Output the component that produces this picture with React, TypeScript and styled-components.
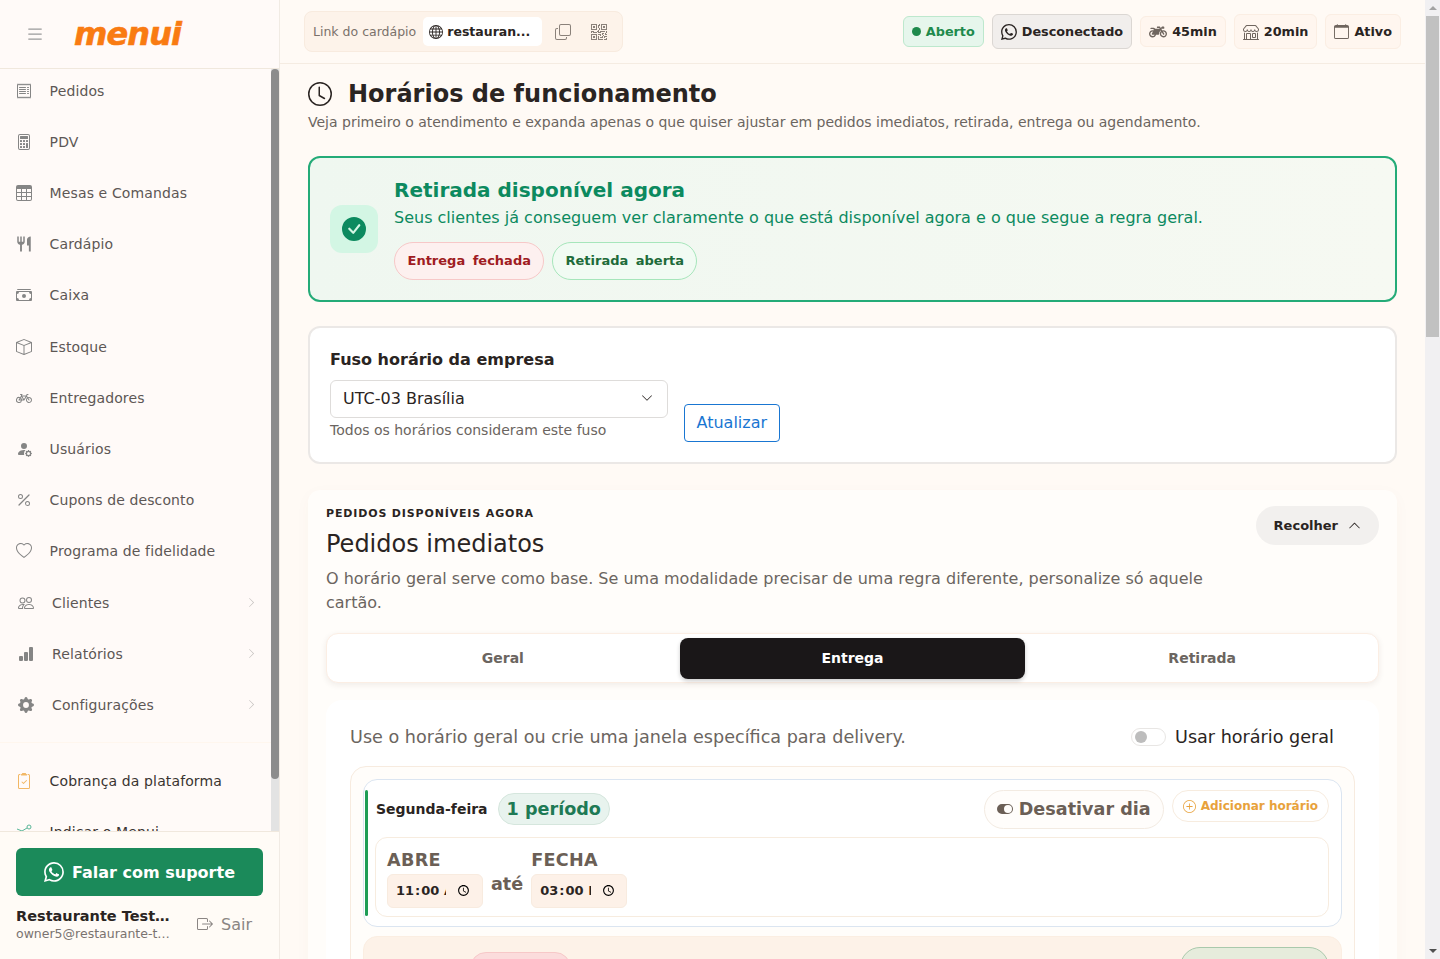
import styled, { createGlobalStyle } from 'styled-components';
import {
  BsBarChartFill,
  BsBicycle,
  BsBox,
  BsBoxArrowRight,
  BsCalculator,
  BsCalendar,
  BsCashStack,
  BsCheckCircleFill,
  BsChevronDown,
  BsChevronRight,
  BsChevronUp,
  BsClipboard2Check,
  BsClock,
  BsCopy,
  BsGearFill,
  BsGlobe,
  BsHeart,
  BsList,
  BsPeople,
  BsPercent,
  BsPersonFillGear,
  BsPlusCircle,
  BsQrCode,
  BsReceipt,
  BsShop,
  BsTable,
  BsToggleOff,
  BsToggleOn,
  BsWhatsapp,
} from 'react-icons/bs';
import { FaMotorcycle } from 'react-icons/fa';
import { MdRestaurant } from 'react-icons/md';

const GlobalStyle = createGlobalStyle`
  html, body {
    margin: 0;
    height: 100%;
    overflow: hidden;
  }
  body {
    font-family: "DejaVu Sans", sans-serif;
    color: #2a2422;
    background: #fffaf5;
  }
  * {
    box-sizing: border-box;
  }
`;

const Layout = styled.div`
  display: flex;
  height: 100vh;
`;

const Sidebar = styled.aside`
  flex: 0 0 280px;
  display: flex;
  flex-direction: column;
  height: 100vh;
  background: #fffaf8;
  border-right: 1px solid #f1ebe4;
`;

const SidebarHead = styled.div`
  flex: 0 0 69px;
  display: flex;
  align-items: center;
  gap: 29px;
  padding-left: 25px;
  border-bottom: 1px solid #f0e8dd;
`;

const MenuButton = styled.span`
  display: flex;
  color: #9a9a9a;
  font-size: 20px;
`;

const Logo = styled.span`
  font-size: 32px;
  line-height: 36px;
  font-weight: 700;
  font-style: italic;
  letter-spacing: -0.9px;
  color: #f97b12;
  -webkit-text-stroke: 0.6px #f97b12;
`;

const NavArea = styled.div`
  flex: 1;
  min-height: 0;
  display: flex;
`;

const NavList = styled.nav`
  flex: 1;
  min-width: 0;
  overflow: hidden;
`;

const NavInner = styled.div`
  margin-top: -3.9px;
`;

const NavTrack = styled.div`
  flex: 0 0 8px;
  background: #e3e3e3;
`;

const NavThumb = styled.div`
  height: 710px;
  border-radius: 4px;
  background: #8c8c8c;
`;

const NavItem = styled.div<{ $nested?: boolean; $strong?: boolean }>`
  display: flex;
  align-items: center;
  height: 51.2px;
  padding-left: ${(p) => (p.$nested ? '18.4px' : '16px')};
  padding-right: 14px;
  font-size: 14px;
  letter-spacing: 0.12px;
  white-space: nowrap;
  color: ${(p) => (p.$strong ? '#3a3431' : '#5d5755')};
`;

const NavIcon = styled.span<{ $color?: string }>`
  flex: 0 0 33.6px;
  display: flex;
  font-size: 16px;
  color: ${(p) => p.$color ?? '#858585'};
`;

const ForkIcon = styled(MdRestaurant)`
  flex-shrink: 0;
  font-size: 18px;
  margin-left: -1px;
`;

const NavArrow = styled.span`
  margin-left: auto;
  display: flex;
  font-size: 11px;
  color: #c2bfbd;
`;

const NavGap = styled.div`
  height: 12px;
  border-bottom: 1px solid #fff6ee;
  margin-bottom: 13px;
`;

const SidebarFooter = styled.div`
  flex: 0 0 128px;
  padding: 16px 16px 0;
  background: #fffbf6;
  border-top: 1px solid #f0e8dd;
`;

const SupportButton = styled.div`
  display: flex;
  align-items: center;
  justify-content: center;
  gap: 8px;
  height: 48px;
  border-radius: 6px;
  background: #1b8a5a;
  color: #fff;
  font-size: 16px;
  font-weight: 700;
  svg {
    font-size: 20px;
  }
`;

const UserRow = styled.div`
  display: flex;
  align-items: center;
  justify-content: space-between;
  margin-top: 11px;
`;

const UserInfo = styled.div`
  width: 156px;
`;

const UserName = styled.div`
  font-size: 14.5px;
  line-height: 18px;
  font-weight: 700;
  color: #2a2422;
  white-space: nowrap;
  overflow: hidden;
  text-overflow: ellipsis;
`;

const UserMail = styled.div`
  font-size: 12.5px;
  line-height: 18px;
  color: #7a7370;
  white-space: nowrap;
  overflow: hidden;
  text-overflow: ellipsis;
`;

const Logout = styled.div`
  display: flex;
  align-items: center;
  gap: 8px;
  margin-top: -2px;
  padding-right: 11px;
  font-size: 16px;
  color: #8a8583;
`;

const Main = styled.main`
  flex: 1;
  min-width: 0;
  height: 100vh;
  display: flex;
  background: #fffaf5;
`;

const MainScroll = styled.div`
  flex: 1;
  min-width: 0;
  overflow: hidden;
`;

const PageTrack = styled.div`
  flex: 0 0 15px;
  display: flex;
  flex-direction: column;
  align-items: center;
  background: #f1f0f2;
`;

const TrackArrow = styled.span<{ $down?: boolean }>`
  flex: 0 0 16px;
  display: flex;
  align-items: center;
  &::before {
    content: '';
    border-left: 4px solid transparent;
    border-right: 4px solid transparent;
    ${(p) => (p.$down ? 'border-top: 4px solid #505050;' : 'border-bottom: 4px solid #a3a3a3;')}
  }
`;

const PageThumb = styled.div`
  width: 13px;
  height: 321px;
  background: #c1c1c1;
`;

const TrackFill = styled.div`
  flex: 1;
`;

const TopBar = styled.header`
  display: flex;
  align-items: center;
  justify-content: space-between;
  height: 64px;
  padding: 0 24px;
  border-bottom: 1px solid #f5ece2;
`;

const LinkBox = styled.div`
  display: flex;
  align-items: center;
  width: 319px;
  height: 41px;
  padding: 0 8px;
  background: #fdf3ea;
  border: 1px solid #f8ebdf;
  border-radius: 8px;
`;

const LinkLabel = styled.span`
  font-size: 12.5px;
  color: #7a716b;
  margin-right: 7px;
  white-space: nowrap;
`;

const LinkChip = styled.span`
  display: flex;
  align-items: center;
  gap: 4px;
  width: 119px;
  height: 29px;
  padding-left: 6px;
  background: #fff;
  border-radius: 5px;
  font-size: 12.5px;
  font-weight: 700;
  color: #2a2422;
  svg {
    font-size: 14px;
  }
`;

const LinkAction = styled.span`
  display: flex;
  margin-left: 13px;
  margin-right: 7px;
  font-size: 16px;
  color: #8a817a;
`;

const StatusRow = styled.div`
  display: flex;
  align-items: center;
  gap: 8px;
`;

const StatusChip = styled.div<{ $tone?: 'open' | 'gray'; $tall?: boolean }>`
  display: flex;
  align-items: center;
  gap: 5px;
  height: ${(p) => (p.$tall ? '35px' : '31px')};
  padding: 0 8px;
  border-radius: 6px;
  font-size: 12.8px;
  font-weight: 700;
  white-space: nowrap;
  border: 1px solid
    ${(p) => (p.$tone === 'open' ? '#bde8cd' : p.$tone === 'gray' ? '#dbd7d3' : '#fbeee3')};
  background: ${(p) => (p.$tone === 'open' ? '#e6f6ec' : p.$tone === 'gray' ? '#f1eeec' : '#fff6ef')};
  color: ${(p) => (p.$tone === 'open' ? '#1e8a4c' : '#2a2422')};
  svg {
    font-size: 16px;
    color: ${(p) => (p.$tone === 'gray' ? '#2a2422' : '#6f655e')};
  }
`;

const BikeIcon = styled(FaMotorcycle)`
  && {
    font-size: 18px;
  }
`;

const CalendarIcon = styled(BsCalendar)`
  && {
    font-size: 15px;
  }
`;

const OpenDot = styled.span`
  width: 9px;
  height: 9px;
  border-radius: 50%;
  background: #1e8a4c;
`;

const Content = styled.div`
  display: flex;
  flex-direction: column;
  padding: 17px 28px 40px;
`;

const TitleRow = styled.div`
  display: flex;
  align-items: center;
  gap: 16px;
  height: 26px;
  svg {
    font-size: 24px;
    color: #2a2422;
  }
`;

const PageTitle = styled.h1`
  margin: 0;
  font-size: 24px;
  line-height: 26px;
  font-weight: 700;
  color: #2a2422;
`;

const PageSub = styled.p`
  margin: 5px 0 24px;
  font-size: 14px;
  line-height: 20px;
  color: #6b6560;
`;

const Hero = styled.section`
  display: flex;
  align-items: center;
  gap: 16px;
  height: 146px;
  padding: 0 20px;
  border: 2px solid #24ab78;
  border-radius: 12px;
  background: linear-gradient(90deg, #eff7f0, #f6f9f2);
`;

const HeroIcon = styled.div`
  display: flex;
  align-items: center;
  justify-content: center;
  width: 48px;
  height: 48px;
  border-radius: 12px;
  background: #d3f6e4;
  color: #0c8a5f;
  font-size: 24px;
`;

const HeroTitle = styled.h2`
  margin: 0;
  font-size: 20px;
  line-height: 24px;
  font-weight: 700;
  color: #0c8a5f;
`;

const HeroText = styled.p`
  margin: 4px 0 12px;
  font-size: 16px;
  line-height: 24px;
  color: #0c8a5f;
`;

const HeroPills = styled.div`
  display: flex;
  gap: 8px;
`;

const HeroPill = styled.span<{ $open?: boolean }>`
  display: flex;
  align-items: center;
  height: 38px;
  padding: ${(p) => (p.$open ? '0 12px 2px' : '0 12.5px 2px')};
  border-radius: 19px;
  font-size: 13px;
  font-weight: 700;
  word-spacing: 3px;
  border: 1px solid ${(p) => (p.$open ? '#a6e6bb' : '#f7c8c8')};
  background: ${(p) => (p.$open ? '#f1fbf3' : '#fdf0ef')};
  color: ${(p) => (p.$open ? '#1e6b3a' : '#9f1c22')};
`;

const ZoneCard = styled.section`
  margin-top: 24px;
  height: 138px;
  padding: 21px 20px 0;
  background: #fff;
  border: 2px solid #ebe8e6;
  border-radius: 12px;
`;

const ZoneTitle = styled.h3`
  margin: 0 0 9px;
  font-size: 16px;
  line-height: 22px;
  font-weight: 700;
  color: #2a2422;
`;

const ZoneRow = styled.div`
  display: flex;
  align-items: flex-end;
  gap: 16px;
`;

const ZoneField = styled.div`
  padding-bottom: 2px;
`;

const ZoneSelect = styled.div`
  display: flex;
  align-items: center;
  justify-content: space-between;
  width: 338px;
  height: 38px;
  padding: 0 14px 2px 12px;
  border: 1px solid #dedcda;
  border-radius: 6px;
  font-size: 16px;
  color: #2a2422;
  svg {
    font-size: 12px;
  }
`;

const ZoneHelp = styled.div`
  margin-top: 2px;
  font-size: 14px;
  line-height: 20px;
  color: #6b6560;
`;

const UpdateButton = styled.button`
  height: 38px;
  padding: 0 11.5px 2px;
  background: #fff;
  border: 1px solid #1976d2;
  border-radius: 4px;
  font: inherit;
  font-size: 16px;
  color: #1976d2;
`;

const Panel = styled.section`
  margin-top: 26px;
  padding: 17px 18px 18px;
  background: #fffdfa;
  border-radius: 12px;
  box-shadow: 0 4px 16px rgba(120, 90, 50, 0.03);
`;

const PanelHead = styled.div`
  display: flex;
  justify-content: space-between;
  align-items: flex-start;
`;

const Eyebrow = styled.div`
  font-size: 11px;
  line-height: 14px;
  font-weight: 700;
  letter-spacing: 0.85px;
  text-transform: uppercase;
  color: #2a2422;
`;

const PanelTitle = styled.h2`
  margin: 7px 0 7px;
  font-size: 24px;
  line-height: 32px;
  font-weight: 400;
  color: #2a2422;
`;

const PanelText = styled.p`
  margin: 0;
  width: 900px;
  font-size: 16px;
  line-height: 24px;
  color: #6b6560;
`;

const CollapseButton = styled.div`
  display: flex;
  align-items: center;
  gap: 10px;
  height: 39px;
  margin-top: -1px;
  padding: 0 18px;
  border-radius: 20px;
  background: #f2f0ee;
  font-size: 13px;
  font-weight: 700;
  color: #2a2422;
  svg {
    font-size: 13px;
  }
`;

const Tabs = styled.div`
  display: grid;
  grid-template-columns: repeat(3, 1fr);
  margin-top: 18px;
  height: 50px;
  padding: 4px 1px 3px;
  background: #fff;
  border: 1px solid #fbeee4;
  border-radius: 12px;
  box-shadow: 0 2px 6px rgba(60, 40, 20, 0.08);
`;

const Tab = styled.div<{ $active?: boolean }>`
  display: flex;
  align-items: center;
  justify-content: center;
  margin: ${(p) => (p.$active ? '0 2px' : '0')};
  padding-bottom: 2px;
  border-radius: 8px;
  font-size: 14px;
  font-weight: 700;
  color: ${(p) => (p.$active ? '#fff' : '#6b6560')};
  background: ${(p) => (p.$active ? '#1a1718' : 'transparent')};
  box-shadow: ${(p) => (p.$active ? '0 2px 4px rgba(0, 0, 0, 0.2)' : 'none')};
`;

const ModeCard = styled.div`
  margin-top: 17px;
  padding: 24px;
  background: #fff;
  border-radius: 16px;
`;

const ModeHead = styled.div`
  display: flex;
  align-items: center;
  justify-content: space-between;
  height: 26px;
  padding-right: 21px;
  font-size: 17.6px;
  color: #6b6560;
`;

const GeneralToggle = styled.div`
  display: flex;
  align-items: center;
  gap: 9px;
  color: #2a2422;
`;

const Switch = styled.span`
  display: flex;
  align-items: center;
  width: 35px;
  height: 18px;
  padding-left: 3px;
  border: 1px solid #e8e6e4;
  border-radius: 9px;
  &::before {
    content: '';
    width: 12px;
    height: 12px;
    border-radius: 50%;
    background: #bdbdbd;
  }
`;

const DaysBox = styled.div`
  display: flex;
  flex-direction: column;
  gap: 9px;
  margin-top: 16px;
  padding: 12px;
  background: #fffdfa;
  border: 1px solid #f7ebdf;
  border-radius: 16px;
`;

const DayCard = styled.div<{ $closed?: boolean }>`
  position: relative;
  padding: 10px 12px 9px 11px;
  border-radius: 14px;
  border: 1px solid ${(p) => (p.$closed ? '#fbeee2' : '#dbe5f1')};
  background: ${(p) => (p.$closed ? '#fdf2e8' : '#fff')};
`;

const DayAccent = styled.span`
  position: absolute;
  left: 1px;
  top: 10px;
  bottom: 10px;
  width: 3px;
  background: #1f9d55;
  border-radius: 2px;
`;

const DayHead = styled.div`
  display: flex;
  align-items: center;
  gap: 10px;
  height: 39px;
  padding-bottom: 2px;
`;

const DayName = styled.span`
  margin-left: 1px;
  font-size: 14px;
  font-weight: 700;
  color: #2a2422;
  white-space: nowrap;
`;

const DayBadge = styled.span<{ $closed?: boolean }>`
  display: flex;
  align-items: center;
  flex-shrink: 0;
  height: 32px;
  margin-top: ${(p) => (p.$closed ? '4px' : '0')};
  padding: 0 8px;
  border-radius: 16px;
  font-size: 17.6px;
  font-weight: 700;
  border: 1px solid ${(p) => (p.$closed ? '#f7c8c8' : '#d5e6dd')};
  background: ${(p) => (p.$closed ? '#fbdcdc' : '#e8f3ee')};
  color: ${(p) => (p.$closed ? '#9f1c22' : '#1e7a55')};
`;

const DayActions = styled.div`
  margin-left: auto;
  align-self: flex-start;
  display: flex;
  align-items: flex-start;
  gap: 8px;
`;

const ToggleDay = styled.span<{ $closed?: boolean }>`
  display: flex;
  align-items: center;
  gap: 6px;
  height: ${(p) => (p.$closed ? '60px' : '39px')};
  padding: ${(p) => (p.$closed ? '0 14px 2px' : '0 12px 2px')};
  border-radius: 20px;
  font-size: 17.6px;
  font-weight: 700;
  white-space: nowrap;
  border: 1px solid ${(p) => (p.$closed ? '#a9c9ac' : '#f3ebe2')};
  background: ${(p) => (p.$closed ? '#e6ecdc' : '#fffdfb')};
  color: ${(p) => (p.$closed ? '#1e7a55' : '#6b5f56')};
  svg {
    font-size: 16px;
  }
`;

const AddPeriod = styled.span`
  display: flex;
  align-items: center;
  gap: 5px;
  height: 32px;
  padding: 0 10px;
  border-radius: 16px;
  border: 1px solid #f7ecdf;
  font-size: 12px;
  font-weight: 700;
  color: #e8a23c;
  svg {
    font-size: 13px;
  }
`;

const PeriodBox = styled.div`
  display: flex;
  align-items: center;
  gap: 8px;
  height: 80px;
  margin-top: 8px;
  padding: 0 11px;
  border: 1px solid #f7ecdf;
  border-radius: 12px;
`;

const TimeField = styled.div`
  display: flex;
  flex-direction: column;
  gap: 1px;
`;

const TimeLabel = styled.span`
  font-size: 17.6px;
  line-height: 26px;
  font-weight: 700;
  letter-spacing: 0.3px;
  color: #6b5f56;
`;

const TimeInput = styled.input`
  width: 96px;
  height: 34px;
  padding: 0 8px 0 7px;
  border: 1px solid #f8ebdf;
  border-radius: 6px;
  background: #fdf1e8;
  font-family: "DejaVu Sans", sans-serif;
  font-size: 13px;
  font-weight: 700;
  color: #2a2422;
`;

const Until = styled.span`
  margin-top: 14px;
  font-size: 17.6px;
  font-weight: 700;
  color: #6b5f56;
`;

type NavEntry = {
  label: string;
  icon: JSX.Element;
  nested?: boolean;
};

const navEntries: NavEntry[] = [
  { label: 'Pedidos', icon: <BsReceipt /> },
  { label: 'PDV', icon: <BsCalculator /> },
  { label: 'Mesas e Comandas', icon: <BsTable /> },
  { label: 'Cardápio', icon: <ForkIcon /> },
  { label: 'Caixa', icon: <BsCashStack /> },
  { label: 'Estoque', icon: <BsBox /> },
  { label: 'Entregadores', icon: <BsBicycle /> },
  { label: 'Usuários', icon: <BsPersonFillGear /> },
  { label: 'Cupons de desconto', icon: <BsPercent /> },
  { label: 'Programa de fidelidade', icon: <BsHeart /> },
  { label: 'Clientes', icon: <BsPeople />, nested: true },
  { label: 'Relatórios', icon: <BsBarChartFill />, nested: true },
  { label: 'Configurações', icon: <BsGearFill />, nested: true },
];

function ReferIcon(): JSX.Element {
  return (
    <svg width="16" height="16" viewBox="0 0 16 16" fill="none" stroke="currentColor" strokeWidth="1">
      <circle cx="13" cy="3" r="2" />
      <path d="M11 4 L6 7 L1 5" />
    </svg>
  );
}

export default function App(): JSX.Element {
  return (
    <Layout>
      <GlobalStyle />
      <Sidebar>
        <SidebarHead>
          <MenuButton>
            <BsList />
          </MenuButton>
          <Logo>menui</Logo>
        </SidebarHead>
        <NavArea>
          <NavList>
            <NavInner>
              {navEntries.map((entry) => (
                <NavItem key={entry.label} $nested={entry.nested}>
                  <NavIcon>{entry.icon}</NavIcon>
                  {entry.label}
                  {entry.nested && (
                    <NavArrow>
                      <BsChevronRight />
                    </NavArrow>
                  )}
                </NavItem>
              ))}
              <NavGap />
              <NavItem $strong>
                <NavIcon $color="#f2b765">
                  <BsClipboard2Check />
                </NavIcon>
                Cobrança da plataforma
              </NavItem>
              <NavItem $strong>
                <NavIcon $color="#58b597">
                  <ReferIcon />
                </NavIcon>
                Indicar o Menui
              </NavItem>
            </NavInner>
          </NavList>
          <NavTrack>
            <NavThumb />
          </NavTrack>
        </NavArea>
        <SidebarFooter>
          <SupportButton>
            <BsWhatsapp />
            Falar com suporte
          </SupportButton>
          <UserRow>
            <UserInfo>
              <UserName>Restaurante Teste Cinco</UserName>
              <UserMail>owner5@restaurante-teste.com</UserMail>
            </UserInfo>
            <Logout>
              <BsBoxArrowRight />
              Sair
            </Logout>
          </UserRow>
        </SidebarFooter>
      </Sidebar>

      <Main>
        <MainScroll>
          <TopBar>
            <LinkBox>
              <LinkLabel>Link do cardápio</LinkLabel>
              <LinkChip>
                <BsGlobe />
                restauran...
              </LinkChip>
              <LinkAction>
                <BsCopy />
              </LinkAction>
              <LinkAction>
                <BsQrCode />
              </LinkAction>
            </LinkBox>
            <StatusRow>
              <StatusChip $tone="open">
                <OpenDot />
                Aberto
              </StatusChip>
              <StatusChip $tone="gray" $tall>
                <BsWhatsapp />
                Desconectado
              </StatusChip>
              <StatusChip>
                <BikeIcon />
                45min
              </StatusChip>
              <StatusChip $tall>
                <BsShop />
                20min
              </StatusChip>
              <StatusChip $tall>
                <CalendarIcon />
                Ativo
              </StatusChip>
            </StatusRow>
          </TopBar>

          <Content>
            <TitleRow>
              <BsClock />
              <PageTitle>Horários de funcionamento</PageTitle>
            </TitleRow>
            <PageSub>
              Veja primeiro o atendimento e expanda apenas o que quiser ajustar em pedidos imediatos, retirada, entrega
              ou agendamento.
            </PageSub>

            <Hero>
              <HeroIcon>
                <BsCheckCircleFill />
              </HeroIcon>
              <div>
                <HeroTitle>Retirada disponível agora</HeroTitle>
                <HeroText>
                  Seus clientes já conseguem ver claramente o que está disponível agora e o que segue a regra geral.
                </HeroText>
                <HeroPills>
                  <HeroPill>Entrega fechada</HeroPill>
                  <HeroPill $open>Retirada aberta</HeroPill>
                </HeroPills>
              </div>
            </Hero>

            <ZoneCard>
              <ZoneTitle>Fuso horário da empresa</ZoneTitle>
              <ZoneRow>
                <ZoneField>
                  <ZoneSelect>
                    UTC-03 Brasília
                    <BsChevronDown />
                  </ZoneSelect>
                  <ZoneHelp>Todos os horários consideram este fuso</ZoneHelp>
                </ZoneField>
                <UpdateButton>Atualizar</UpdateButton>
              </ZoneRow>
            </ZoneCard>

            <Panel>
              <PanelHead>
                <div>
                  <Eyebrow>Pedidos disponíveis agora</Eyebrow>
                  <PanelTitle>Pedidos imediatos</PanelTitle>
                  <PanelText>
                    O horário geral serve como base. Se uma modalidade precisar de uma regra diferente, personalize só
                    aquele cartão.
                  </PanelText>
                </div>
                <CollapseButton>
                  Recolher
                  <BsChevronUp />
                </CollapseButton>
              </PanelHead>

              <Tabs>
                <Tab>Geral</Tab>
                <Tab $active>Entrega</Tab>
                <Tab>Retirada</Tab>
              </Tabs>

              <ModeCard>
                <ModeHead>
                  Use o horário geral ou crie uma janela específica para delivery.
                  <GeneralToggle>
                    <Switch />
                    Usar horário geral
                  </GeneralToggle>
                </ModeHead>

                <DaysBox>
                  <DayCard>
                    <DayAccent />
                    <DayHead>
                      <DayName>Segunda-feira</DayName>
                      <DayBadge>1 período</DayBadge>
                      <DayActions>
                        <ToggleDay>
                          <BsToggleOn />
                          Desativar dia
                        </ToggleDay>
                        <AddPeriod>
                          <BsPlusCircle />
                          Adicionar horário
                        </AddPeriod>
                      </DayActions>
                    </DayHead>
                    <PeriodBox>
                      <TimeField>
                        <TimeLabel>ABRE</TimeLabel>
                        <TimeInput type="time" defaultValue="11:00" />
                      </TimeField>
                      <Until>até</Until>
                      <TimeField>
                        <TimeLabel>FECHA</TimeLabel>
                        <TimeInput type="time" defaultValue="15:00" />
                      </TimeField>
                    </PeriodBox>
                  </DayCard>

                  <DayCard $closed>
                    <DayHead>
                      <DayName>Terça-feira</DayName>
                      <DayBadge $closed>Fechado</DayBadge>
                      <DayActions>
                        <ToggleDay $closed>
                          <BsToggleOff />
                          Ativar dia
                        </ToggleDay>
                      </DayActions>
                    </DayHead>
                  </DayCard>
                </DaysBox>
              </ModeCard>
            </Panel>
          </Content>
        </MainScroll>
        <PageTrack>
          <TrackArrow />
          <PageThumb />
          <TrackFill />
          <TrackArrow $down />
        </PageTrack>
      </Main>
    </Layout>
  );
}
